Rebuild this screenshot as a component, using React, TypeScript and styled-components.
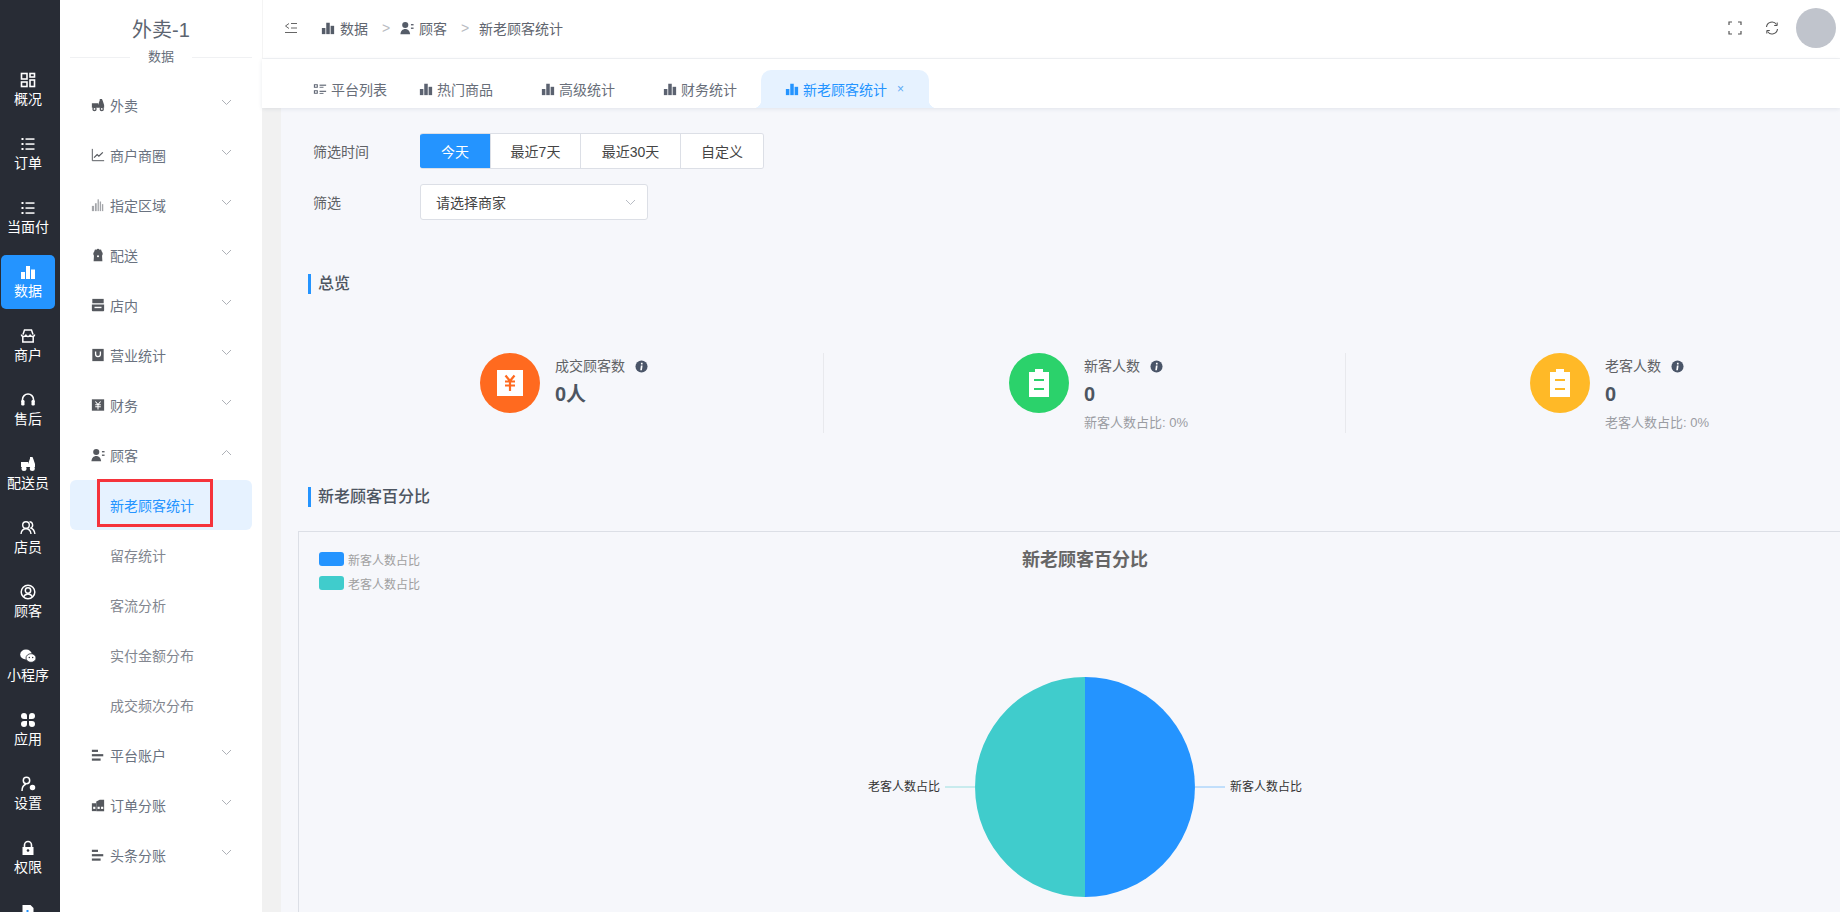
import React from "react";
import styled, { createGlobalStyle } from "styled-components";

const Global = createGlobalStyle`
  html, body { margin: 0; padding: 0; height: 100%; overflow: hidden; background: #fff; }
  body { font-family: "Liberation Sans", "Noto Sans CJK SC", sans-serif; }
  * { box-sizing: border-box; }
`;

const Shell = styled.div`
  display: flex;
  width: 1840px;
  height: 912px;
  overflow: hidden;
`;
const Rail = styled.nav`
  flex: 0 0 60px;
  height: 912px;
  overflow: hidden;
  background: #282c35;
  padding: 63px 5px 0 1px;
  display: flex;
  flex-direction: column;
  gap: 10px;
`;
const RailItem = styled.div<{ $active?: boolean }>`
  flex: 0 0 54px;
  border-radius: 5px;
  background: ${(p) => (p.$active ? "#2494ff" : "transparent")};
  color: #fff;
  display: flex;
  flex-direction: column;
  align-items: center;
  padding-top: 9px;
  font-size: 14px;
  line-height: 18px;
  white-space: nowrap;
  svg { width: 16px; height: 16px; margin-bottom: 2px; }
`;
const Menu = styled.aside`
  flex: 0 0 202px;
  background: #fff;
  display: flex;
  flex-direction: column;
`;
const MenuHead = styled.div`
  height: 80px;
  display: flex;
  flex-direction: column;
  align-items: center;
  color: #5c6470;
`;
const AppTitle = styled.div`
  margin-top: 16px;
  font-size: 20px;
  line-height: 28px;
`;
const Divider = styled.div`
  align-self: stretch;
  margin: 1px 10px 0;
  display: flex;
  align-items: center;
  gap: 18px;
  font-size: 13px;
  line-height: 24px;
  color: #666e7a;
  &::before, &::after { content: ""; flex: 1; height: 1px; background: #f0f1f3; }
`;
const MenuRow = styled.div<{ $sub?: boolean; $active?: boolean }>`
  position: relative;
  height: 50px;
  margin: 0 10px;
  padding-left: ${(p) => (p.$sub ? "40px" : "21px")};
  display: flex;
  align-items: center;
  gap: 5px;
  font-size: 14px;
  border-radius: 6px;
  color: ${(p) => (p.$active ? "#2494ff" : p.$sub ? "#82868f" : "#6a7280")};
  background: ${(p) => (p.$active ? "#e6f2ff" : "transparent")};
  svg.lead { width: 14px; height: 14px; color: #55585e; flex: none; }
`;
const Chevron = styled.svg`
  position: absolute;
  right: 20px;
  top: 19px;
  width: 11px;
  height: 7px;
  fill: none;
  stroke: #aeb1b7;
  stroke-width: 1;
`;
const RedMark = styled.div`
  position: absolute;
  left: 27px;
  top: -1px;
  width: 116px;
  height: 48px;
  border: 3px solid #f5333b;
`;
const Main = styled.main`
  flex: 1;
  min-width: 0;
  display: flex;
  flex-direction: column;
`;
const TopBar = styled.header`
  flex: 0 0 59px;
  border-bottom: 1px solid #f2f3f5;
  border-left: 1px solid #f4f4f4;
  display: flex;
  align-items: center;
  padding: 0 4px 2px 21px;
  color: #60656f;
  font-size: 14px;
`;
const Collapse = styled.svg`
  width: 14px;
  height: 12px;
  margin-right: 23px;
  fill: none;
  stroke: #666;
`;
const Crumb = styled.span`
  display: flex;
  align-items: center;
  gap: 5px;
  svg { width: 14px; height: 14px; color: #555c68; }
`;
const Sep = styled.span`
  margin: 0 10px 0 14px;
  color: #b9bcc2;
  font-size: 14px;
  width: 8px;
`;
const TopTools = styled.div`
  margin-left: auto;
  display: flex;
  align-items: center;
  color: #555;
  svg { width: 14px; height: 14px; }
`;
const ToolGap = styled.span`
  width: 23px;
`;
const Avatar = styled.div`
  width: 40px;
  height: 40px;
  margin-left: 17px;
  border-radius: 50%;
  background: #c0c4cc;
`;
const TabBar = styled.div`
  position: relative;
  z-index: 1;
  flex: 0 0 49px;
  display: flex;
  align-items: flex-end;
  padding-left: 51px;
  background: #fff;
  box-shadow: 0 1px 4px rgba(40, 60, 90, 0.1);
`;
const Tab = styled.div<{ $w: number; $active?: boolean }>`
  position: relative;
  flex: 0 0 ${(p) => p.$w}px;
  height: 38px;
  display: flex;
  align-items: center;
  gap: 4px;
  padding-left: ${(p) => (p.$active ? "24px" : "0")};
  padding-bottom: 1px;
  font-size: 14px;
  color: ${(p) => (p.$active ? "#2494ff" : "#686e79")};
  background: ${(p) => (p.$active ? "#e6f2ff" : "transparent")};
  border-radius: ${(p) => (p.$active ? "10px 10px 0 0" : "0")};
  svg.lead { width: 14px; height: 14px; color: ${(p) => (p.$active ? "#2494ff" : "#5b6270")}; }
  ${(p) =>
    p.$active &&
    `&::before, &::after { content: ""; position: absolute; bottom: 0; width: 8px; height: 8px; background: radial-gradient(circle at var(--o) 0, transparent 8px, #e6f2ff 8.5px); }
     &::before { left: -8px; --o: 0; }
     &::after { right: -8px; --o: 100%; }`}
`;
const TabClose = styled.span`
  margin-left: 6px;
  font-size: 12px;
  color: #5aa9f5;
`;
const Body = styled.div`
  flex: 1;
  min-height: 0;
  background: #f6f7fb;
  border-left: 19px solid #f1f1f1;
  padding: 25px 0 0 17px;
  overflow: hidden;
`;
const FormRow = styled.div`
  display: flex;
  align-items: center;
  height: 36px;
  margin-bottom: 15px;
  padding-left: 15px;
`;
const FormLabel = styled.div`
  flex: 0 0 107px;
  font-size: 14px;
  color: #606266;
`;
const BtnGroup = styled.div`
  display: flex;
  height: 36px;
  border-radius: 3px;
  overflow: hidden;
  border: 1px solid #dcdfe6;
  border-left: 0;
`;
const Btn = styled.div<{ $w: number; $on?: boolean }>`
  flex: 0 0 ${(p) => p.$w}px;
  display: flex;
  align-items: center;
  justify-content: center;
  font-size: 14px;
  margin-top: ${(p) => (p.$on ? "-1px" : "0")};
  margin-bottom: ${(p) => (p.$on ? "-1px" : "0")};
  background: ${(p) => (p.$on ? "#2494ff" : "#fff")};
  color: ${(p) => (p.$on ? "#fff" : "#444")};
  border-left: ${(p) => (p.$on ? "0" : "1px solid #dcdfe6")};
`;
const SelectBox = styled.div`
  width: 228px;
  height: 36px;
  background: #fff;
  border: 1px solid #dcdfe6;
  border-radius: 3px;
  display: flex;
  align-items: center;
  padding: 0 11px 0 15px;
  font-size: 14px;
  color: #444;
  justify-content: space-between;
  svg { width: 11px; height: 7px; fill: none; stroke: #b8bcc4; }
`;
const Heading = styled.h3<{ $top: number }>`
  margin: ${(p) => p.$top}px 0 0 10px;
  height: 20px;
  border-left: 3px solid #2494ff;
  padding-left: 7px;
  font-size: 16px;
  line-height: 20px;
  font-weight: 500;
  color: #4d5561;
`;
const Stats = styled.section`
  display: flex;
  margin-top: 59px;
  margin-left: 4px;
  height: 80px;
`;
const StatCol = styled.div<{ $pad: number; $line?: boolean }>`
  flex: 0 0 522px;
  padding-left: ${(p) => p.$pad}px;
  display: flex;
  gap: 15px;
  border-right: ${(p) => (p.$line ? "1px solid #e8e9ed" : "0")};
`;
const Circle = styled.div<{ $c: string }>`
  flex: 0 0 60px;
  height: 60px;
  border-radius: 50%;
  background: ${(p) => p.$c};
  display: flex;
  align-items: center;
  justify-content: center;
  svg { width: 28px; height: 32px; }
`;
const StatText = styled.div`
  display: flex;
  flex-direction: column;
  padding-top: 3px;
`;
const StatLabel = styled.div`
  display: flex;
  align-items: center;
  gap: 10px;
  font-size: 14px;
  line-height: 20px;
  color: #606266;
  svg { width: 13px; height: 13px; }
`;
const StatValue = styled.div`
  margin-top: 5px;
  font-size: 20px;
  line-height: 26px;
  font-weight: 700;
  color: #4d5561;
`;
const StatSub = styled.div`
  margin-top: 7px;
  font-size: 13px;
  line-height: 18px;
  color: #9a9ca2;
  white-space: nowrap;
`;
const Panel = styled.section`
  margin-top: 24px;
  width: 1574px;
  height: 420px;
  border: 1px solid #dcdfe6;
`;
const PanelHead = styled.div`
  display: grid;
  grid-template-columns: 1fr auto 1fr;
  padding: 20px 0 0 20px;
`;
const Legend = styled.div`
  display: flex;
  flex-direction: column;
  gap: 10px;
`;
const LegendItem = styled.div<{ $c: string }>`
  display: flex;
  align-items: center;
  gap: 4px;
  height: 14px;
  font-size: 12px;
  color: #a0a0a0;
  &::before {
    content: "";
    width: 25px;
    height: 14px;
    border-radius: 3px;
    background: ${(p) => p.$c};
  }
`;
const ChartTitle = styled.div`
  font-size: 18px;
  line-height: 18px;
  font-weight: 700;
  color: #666;
  margin-top: -1px;
  transform: translateX(-10px);
`;
const Pie = styled.svg`
  display: block;
  margin: 77px auto 0;
  width: 480px;
  height: 240px;
  text { font-size: 12px; fill: #333; font-family: "Liberation Sans", "Noto Sans CJK SC", sans-serif; }
`;

const c = "currentColor";
const I: Record<string, React.ReactNode> = {
  grid: (
    <g fill="none" stroke={c} strokeWidth="1.6">
      <rect x="1.5" y="1.5" width="5.5" height="5.5" />
      <rect x="10" y="1.5" width="4.5" height="3.5" />
      <rect x="1.5" y="10" width="5.5" height="4.5" />
      <rect x="10" y="8" width="4.5" height="6.5" />
    </g>
  ),
  list: (
    <g fill={c}>
      <rect x="1.5" y="2" width="2" height="2" />
      <rect x="1.5" y="7" width="2" height="2" />
      <rect x="1.5" y="12" width="2" height="2" />
      <rect x="5.5" y="2.3" width="9" height="1.5" />
      <rect x="5.5" y="7.3" width="9" height="1.5" />
      <rect x="5.5" y="12.3" width="9" height="1.5" />
    </g>
  ),
  bars: (
    <g fill={c}>
      <rect x="1" y="8" width="4" height="7" />
      <rect x="6" y="2" width="4" height="13" />
      <rect x="11" y="5.5" width="4" height="9.5" />
    </g>
  ),
  shop: (
    <g fill="none" stroke={c} strokeWidth="1.5">
      <path d="M3 6.5 4.5 2h7L13 6.5" />
      <path d="M1.5 6.5c0 2.6 4.3 2.6 4.3 0 0 2.6 4.4 2.6 4.4 0 0 2.6 4.3 2.6 4.3 0" />
      <path d="M2.8 8.5V14h10.4V8.5" />
    </g>
  ),
  headset: (
    <g>
      <path d="M2.5 10V7.5a5.5 5.5 0 0 1 11 0V10" fill="none" stroke={c} strokeWidth="1.6" />
      <rect x="1.2" y="8" width="3.3" height="5.5" rx="1.2" fill={c} />
      <rect x="11.5" y="8" width="3.3" height="5.5" rx="1.2" fill={c} />
    </g>
  ),
  scooter: (
    <g fill={c}>
      <path d="M1 6h7v2l2-5.500V1h2.500l1 2.500L15 8v3H1z" />
      <circle cx="4" cy="12.500" r="2.500" />
      <circle cx="12.300" cy="12.500" r="2.500" />
      <circle cx="4" cy="12.500" r="1" fill="#fff" />
      <circle cx="12.300" cy="12.500" r="1" fill="#fff" />
    </g>
  ),
  users: (
    <g fill="none" stroke={c} strokeWidth="1.4">
      <circle cx="6" cy="5" r="3.300" />
      <path d="M1 14c.4-3.500 2.400-5.200 5-5.200S10.600 10.500 11 14" />
      <path d="M9.500 1.800a3.300 3.300 0 0 1 1.400 6.200c2.200.8 3.600 2.800 4 6" />
    </g>
  ),
  userCircle: (
    <g fill="none" stroke={c} strokeWidth="1.5">
      <circle cx="8" cy="8" r="6.800" />
      <circle cx="8" cy="6.500" r="2.700" />
      <path d="M3.500 13c1-2 2.500-3 4.500-3s3.500 1 4.500 3" />
    </g>
  ),
  wechat: (
    <g fill={c}>
      <ellipse cx="6" cy="6.500" rx="5.800" ry="5" />
      <ellipse cx="11" cy="10" rx="5" ry="4.300" stroke="#282c35" strokeWidth=".8" />
      <circle cx="9.300" cy="9.500" r=".7" fill="#282c35" />
      <circle cx="12.700" cy="9.500" r=".7" fill="#282c35" />
    </g>
  ),
  apps: (
    <g fill={c}>
      <path d="M1 4a3 3 0 0 1 6 0v3H4a3 3 0 0 1-3-3z" />
      <path d="M15 4a3 3 0 0 0-6 0v3h3a3 3 0 0 0 3-3z" />
      <path d="M1 12a3 3 0 0 0 6 0V9H4a3 3 0 0 0-3 3z" />
      <path d="M15 12a3 3 0 0 1-6 0V9h3a3 3 0 0 1 3 3z" />
    </g>
  ),
  gear: (
    <g fill="none" stroke={c} strokeWidth="1.5">
      <circle cx="6.500" cy="4.500" r="3.200" />
      <path d="M2 15c0-3.500 1.500-6 4-7" />
      <circle cx="12.500" cy="11.500" r="2" fill={c} />
    </g>
  ),
  lock: (
    <g>
      <path d="M4.500 7V5a3.500 3.500 0 0 1 7 0v2" fill="none" stroke={c} strokeWidth="1.6" />
      <path d="M2.500 7h11v8h-11z" fill={c} />
      <circle cx="8" cy="10.500" r="1.300" fill="#282c35" />
    </g>
  ),
  doc: (
    <g>
      <path d="M2.500 1h8l3 3v11h-11z" fill={c} />
      <rect x="6.500" y="6" width="2" height="6" fill="#2494ff" />
    </g>
  ),
  line: (
    <g fill="none" stroke={c} strokeWidth="1.1">
      <path d="M1.500 1v13.500H15" />
      <path d="M3.500 11 7 7.500l2 1.800L13.500 5" strokeWidth="1.500" />
    </g>
  ),
  thinBars: (
    <g fill="#a3a5a9">
      <rect x="1" y="9" width="2.500" height="6" />
      <rect x="4.500" y="6" width="2" height="9" />
      <rect x="7.500" y="1.500" width="1.500" height="13.500" />
      <rect x="10" y="4" width="1.500" height="11" />
      <rect x="12.500" y="7" width="1.500" height="8" />
    </g>
  ),
  bag: (
    <g fill={c}>
      <path d="M4.500 1h7L11 3.500H13V8.500l0 6.500H3V3.500h2z" opacity=".0" />
      <circle cx="8" cy="2.600" r="3" opacity=".0" />
      <path d="M8 1a2 2 0 0 1 1.800 1.100 1.500 1.500 0 0 1 2.200 1.200L13 5c.6 1 .5 3-.4 3.600L13 15H3l.4-6.400C2.500 8 2.400 6 3 5l1-1.700A1.500 1.500 0 0 1 6.200 2.100 2 2 0 0 1 8 1z" />
      <circle cx="8" cy="9.500" r="1.200" fill="#fff" />
    </g>
  ),
  store: (
    <g fill={c}>
      <path d="M1.500 1h13v5h-13z" />
      <path d="M1 7.500h14V14a1 1 0 0 1-1 1H2a1 1 0 0 1-1-1z" />
      <rect x="4" y="10" width="8" height="1.600" fill="#fff" />
    </g>
  ),
  shopBag: (
    <g fill={c}>
      <path d="M1.500 1h13v14h-13z" />
      <path d="M4.500 4v3a3.500 3.500 0 0 0 7 0V4h-1.500v3a2 2 0 0 1-4 0V4z" fill="#fff" />
    </g>
  ),
  yuanBox: (
    <g>
      <rect x="1" y="1.500" width="14" height="13" fill={c} />
      <path d="M5 4l3 3.500L11 4M4.800 7.800h6.400M4.800 10h6.400M8 7.500V13" fill="none" stroke="#fff" strokeWidth="1.200" />
    </g>
  ),
  userList: (
    <g fill={c}>
      <circle cx="6" cy="4.500" r="3.500" />
      <path d="M0.500 15c0-3.500 2.500-6 5.500-6s5.500 2.500 5.500 6z" />
      <rect x="12.500" y="3.500" width="3" height="1.500" />
      <rect x="12.500" y="7.500" width="3" height="1.500" />
    </g>
  ),
  stack: (
    <g fill={c}>
      <rect x="1" y="2" width="7" height="2.500" />
      <rect x="1" y="7" width="13" height="2.500" />
      <rect x="1" y="12" width="10" height="2.500" />
    </g>
  ),
  chartBox: (
    <g fill={c}>
      <path d="M1 6h5V15H1z" />
      <path d="M7 3h3v1h-3z" opacity="0" />
      <path d="M6 4l4-2h5v13H6z" />
      <g fill="#fff">
        <rect x="2.500" y="10" width="2.500" height="2.500" />
        <rect x="7.500" y="10" width="2.500" height="2.500" />
        <rect x="11.500" y="10" width="2.500" height="2.500" />
      </g>
    </g>
  ),
  tabList: (
    <g fill={c}>
      <path d="M1 2.500h4.500v4H1zM2.200 3.700v1.600h2.100V3.700z" fillRule="evenodd" />
      <path d="M1 9.500h4.500v4H1zM2.200 10.700v1.600h2.100v-1.600z" fillRule="evenodd" />
      <rect x="7.500" y="3" width="7.500" height="1.300" />
      <rect x="7.500" y="5.500" width="4.500" height="1" />
      <rect x="7.500" y="10" width="7.500" height="1.300" />
      <rect x="7.500" y="12.500" width="4.500" height="1" />
    </g>
  ),
};

const Icon = ({ n, className }: { n: string; className?: string }) => (
  <svg viewBox="0 0 16 16" className={className}>
    {I[n]}
  </svg>
);

const rail: [string, string, boolean?][] = [
  ["grid", "概况"],
  ["list", "订单"],
  ["list", "当面付"],
  ["bars", "数据", true],
  ["shop", "商户"],
  ["headset", "售后"],
  ["scooter", "配送员"],
  ["users", "店员"],
  ["userCircle", "顾客"],
  ["wechat", "小程序"],
  ["apps", "应用"],
  ["gear", "设置"],
  ["lock", "权限"],
  ["doc", "报表"],
];

type Row = { icon?: string; label: string; open?: boolean; active?: boolean };
const menu: Row[] = [
  { icon: "scooter", label: "外卖" },
  { icon: "line", label: "商户商圈" },
  { icon: "thinBars", label: "指定区域" },
  { icon: "bag", label: "配送" },
  { icon: "store", label: "店内" },
  { icon: "shopBag", label: "营业统计" },
  { icon: "yuanBox", label: "财务" },
  { icon: "userList", label: "顾客", open: true },
  { label: "新老顾客统计", active: true },
  { label: "留存统计" },
  { label: "客流分析" },
  { label: "实付金额分布" },
  { label: "成交频次分布" },
  { icon: "stack", label: "平台账户" },
  { icon: "chartBox", label: "订单分账" },
  { icon: "stack", label: "头条分账" },
];

const Info = () => (
  <svg viewBox="0 0 14 14">
    <circle cx="7" cy="7" r="6.500" fill="#4a5568" />
    <rect x="6.200" y="6" width="1.800" height="5" fill="#fff" transform="skewX(-8) translate(1 0)" />
    <rect x="6.400" y="3" width="1.800" height="1.800" fill="#fff" />
  </svg>
);
const YuanCard = () => (
  <svg viewBox="0 0 28 32">
    <rect x="1" y="3" width="26" height="26" fill="#fff" />
    <path d="M9.500 8.500 14 14l4.500-5.500M9 14.500h10M9 18.500h10M14 14v10" fill="none" stroke="#ff6a1f" strokeWidth="2.200" />
  </svg>
);
const Clip = ({ col }: { col: string }) => (
  <svg viewBox="0 0 28 32">
    <rect x="4" y="5" width="20" height="25" fill="#fff" />
    <rect x="10" y="2" width="8" height="4" fill="#fff" />
    <rect x="9" y="12" width="10" height="2" fill={col} />
    <rect x="9" y="21" width="10" height="2" fill={col} />
  </svg>
);

const tabs: [string, string, number][] = [
  ["tabList", "平台列表", 106],
  ["bars", "热门商品", 122],
  ["bars", "高级统计", 122],
  ["bars", "财务统计", 98],
];

export default function App() {
  return (
    <>
      <Global />
      <Shell>
        <Rail>
          {rail.map(([n, t, a]) => (
            <RailItem key={t} $active={a}>
              <Icon n={n} />
              {t}
            </RailItem>
          ))}
        </Rail>
        <Menu>
          <MenuHead>
            <AppTitle>外卖-1</AppTitle>
            <Divider>数据</Divider>
          </MenuHead>
          {menu.map((r) => (
            <MenuRow key={r.label} $sub={!r.icon} $active={r.active}>
              {r.icon && <Icon n={r.icon} className="lead" />}
              {r.label}
              {r.icon && (
                <Chevron viewBox="0 0 11 7">
                  <path d={r.open ? "M1 6l4.500-4.500L10 6" : "M1 1l4.500 4.500L10 1"} />
                </Chevron>
              )}
              {r.active && <RedMark />}
            </MenuRow>
          ))}
        </Menu>
        <Main>
          <TopBar>
            <Collapse viewBox="0 0 14 12">
              <path d="M5 1.500 1.500 4 5 6.500M7 1.500h6M7 6h6M1 10.500h12" />
            </Collapse>
            <Crumb>
              <Icon n="bars" />
              数据
            </Crumb>
            <Sep>&gt;</Sep>
            <Crumb>
              <Icon n="userList" />
              顾客
            </Crumb>
            <Sep>&gt;</Sep>
            <span>新老顾客统计</span>
            <TopTools>
              <svg viewBox="0 0 14 14" fill="none" stroke="currentColor" strokeWidth="1.200">
                <path d="M1 4V1h3M10 1h3v3M13 10v3h-3M4 13H1v-3" />
              </svg>
              <ToolGap />
              <svg viewBox="0 0 14 14" fill="none" stroke="currentColor" strokeWidth="1.100">
                <path d="M1.500 6A5.500 5.500 0 0 1 11.500 3.500M12.500 8A5.500 5.500 0 0 1 2.500 10.500" />
                <path d="M12.200 1.500v3h-3M1.800 12.500v-3h3" strokeWidth="1" />
              </svg>
              <Avatar />
            </TopTools>
          </TopBar>
          <TabBar>
            {tabs.map(([n, t, w]) => (
              <Tab key={t} $w={w}>
                <Icon n={n} className="lead" />
                {t}
              </Tab>
            ))}
            <Tab $w={168} $active>
              <Icon n="bars" className="lead" />
              新老顾客统计
              <TabClose>×</TabClose>
            </Tab>
          </TabBar>
          <Body>
            <FormRow>
              <FormLabel>筛选时间</FormLabel>
              <BtnGroup>
                <Btn $w={70} $on>今天</Btn>
                <Btn $w={90}>最近7天</Btn>
                <Btn $w={100}>最近30天</Btn>
                <Btn $w={83}>自定义</Btn>
              </BtnGroup>
            </FormRow>
            <FormRow>
              <FormLabel>筛选</FormLabel>
              <SelectBox>
                请选择商家
                <svg viewBox="0 0 11 7">
                  <path d="M1 1l4.500 4.500L10 1" />
                </svg>
              </SelectBox>
            </FormRow>
            <Heading $top={54}>总览</Heading>
            <Stats>
              <StatCol $pad={178} $line>
                <Circle $c="#ff6a1f">
                  <YuanCard />
                </Circle>
                <StatText>
                  <StatLabel>
                    成交顾客数
                    <Info />
                  </StatLabel>
                  <StatValue>0人</StatValue>
                </StatText>
              </StatCol>
              <StatCol $pad={185} $line>
                <Circle $c="#2bd26b">
                  <Clip col="#2bd26b" />
                </Circle>
                <StatText>
                  <StatLabel>
                    新客人数
                    <Info />
                  </StatLabel>
                  <StatValue>0</StatValue>
                  <StatSub>新客人数占比: 0%</StatSub>
                </StatText>
              </StatCol>
              <StatCol $pad={184}>
                <Circle $c="#ffb927">
                  <Clip col="#ffb927" />
                </Circle>
                <StatText>
                  <StatLabel>
                    老客人数
                    <Info />
                  </StatLabel>
                  <StatValue>0</StatValue>
                  <StatSub>老客人数占比: 0%</StatSub>
                </StatText>
              </StatCol>
            </Stats>
            <Heading $top={54}>新老顾客百分比</Heading>
            <Panel>
              <PanelHead>
                <Legend>
                  <LegendItem $c="#2494ff">新客人数占比</LegendItem>
                  <LegendItem $c="#40cccc">老客人数占比</LegendItem>
                </Legend>
                <ChartTitle>新老顾客百分比</ChartTitle>
                <span />
              </PanelHead>
              <Pie viewBox="0 0 480 240">
                <path d="M240 10a110 110 0 0 1 0 220z" fill="#2494ff" />
                <path d="M240 10a110 110 0 0 0 0 220z" fill="#40cccc" />
                <path d="M350 120h30" stroke="#8cc6fb" strokeWidth="1" />
                <path d="M130 120h-30" stroke="#9adfe0" strokeWidth="1" />
                <text x="385" y="124">新客人数占比</text>
                <text x="95" y="124" textAnchor="end">老客人数占比</text>
              </Pie>
            </Panel>
          </Body>
        </Main>
      </Shell>
    </>
  );
}
